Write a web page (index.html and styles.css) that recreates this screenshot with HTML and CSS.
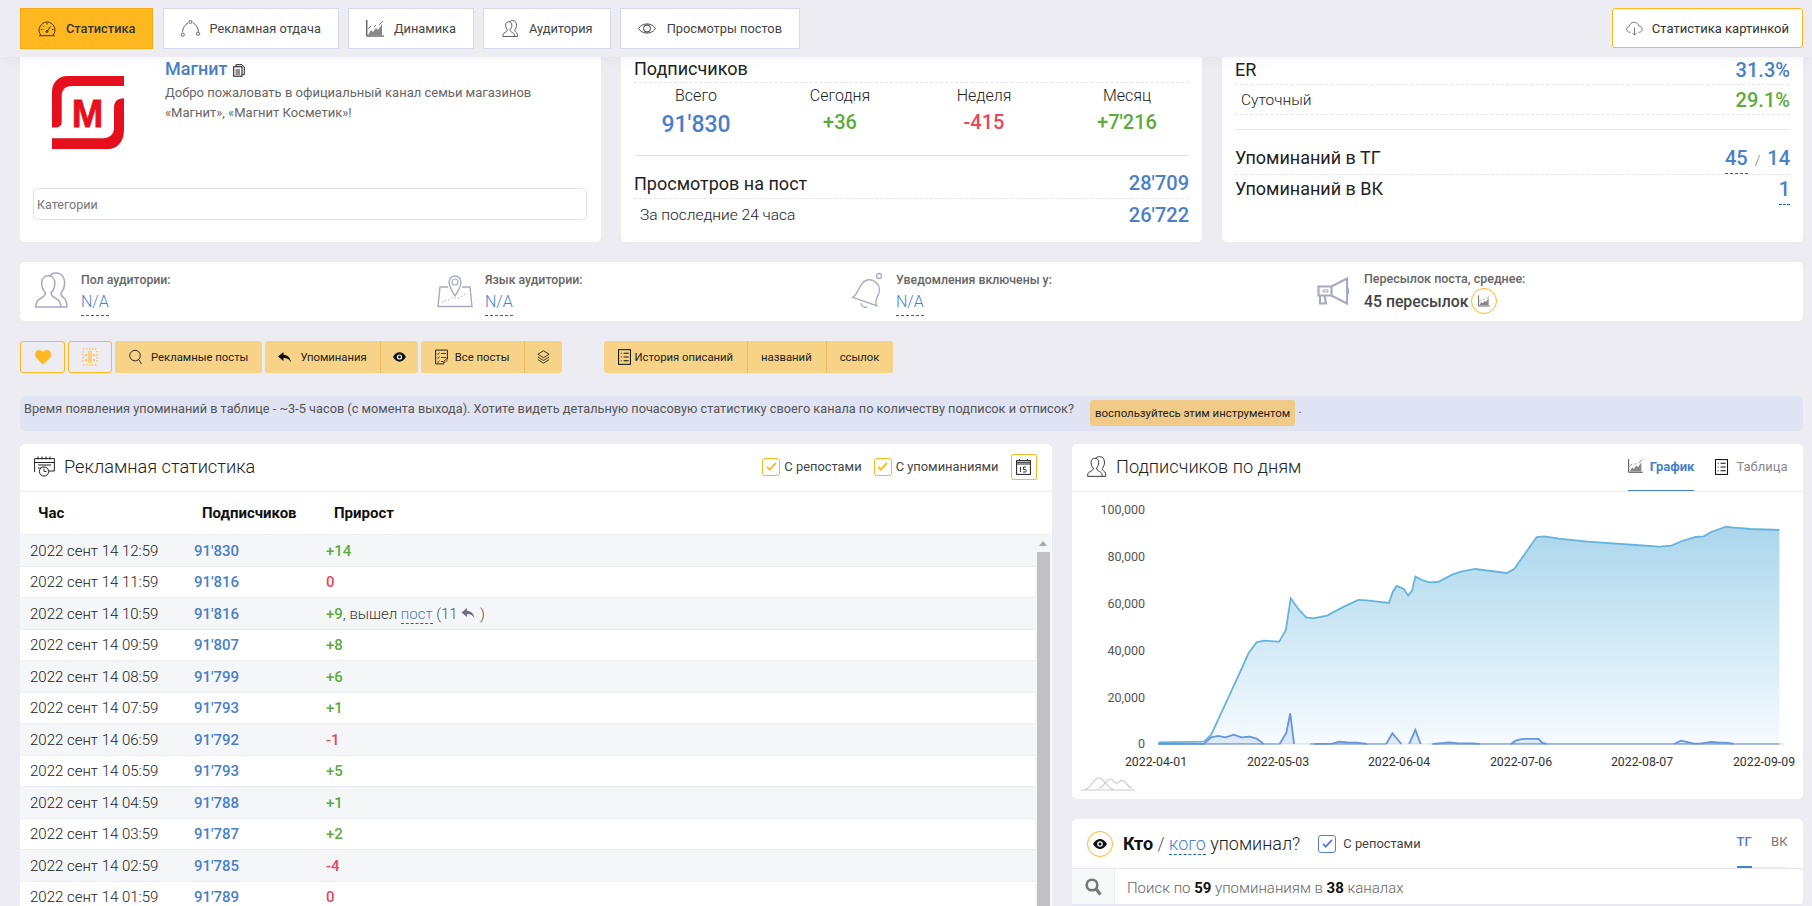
FILE: index.html
```html
<!DOCTYPE html>
<html lang="ru">
<head>
<meta charset="utf-8">
<title>Магнит — статистика</title>
<link rel="stylesheet" href="styles.css">
</head>
<body>
<svg class="sprite" aria-hidden="true">
  <defs>
    <linearGradient id="areaFill" x1="0" y1="0" x2="0" y2="1">
      <stop offset="0" stop-color="#abd6ec"/>
      <stop offset="1" stop-color="#f6fbfe"/>
    </linearGradient>
  </defs>
  <symbol id="i-gauge" viewBox="0 0 18 16"><path d="M3 14.500C1 12.500.7 10 1.300 7.800 2.400 4 5.500 1.500 9 1.500s6.600 2.500 7.700 6.300c.6 2.200.3 4.700-1.700 6.700M1 15.200h16M9 11l3.500-5M2.800 9H4.500M14 9h1.500M9 2.500v1.500M4.500 5l1 1" fill="none" stroke="#222" stroke-width=".9"/><circle cx="9" cy="11" r="1" fill="none" stroke="#222" stroke-width=".9"/></symbol>
  <symbol id="i-net" viewBox="0 0 22 18"><path d="M8.500 3C5 5 3 8 2.500 12.500M13.500 3c3.500 2 5.500 5 6 9.500" fill="none" stroke="#333" stroke-width=".8"/><circle cx="11" cy="2" r="1.600" fill="#fff" stroke="#333" stroke-width=".8"/><circle cx="2.800" cy="15.500" r="1.700" fill="#fff" stroke="#333" stroke-width=".8"/><circle cx="19" cy="14.500" r="1.700" fill="#fff" stroke="#333" stroke-width=".8"/></symbol>
  <symbol id="i-chart" viewBox="0 0 18 17"><path d="M.8 0v16h17" fill="none" stroke="#222" stroke-width="1"/><path d="M2 15l3-5 2 2 3-4 2 2 4-6v11z" fill="#888"/><path d="M2 9l3-3M8 7l2-2M13 5l4-4" stroke="#555" stroke-width=".8"/></symbol>
  <symbol id="i-users" viewBox="0 0 30 33"><path d="M13 5C14 2.500 17 1 20 1c4.500 0 7.500 3.500 7.500 8.500 0 5-1.500 8-3.500 10 0 2 1.500 3.500 3 4.500 1.500 1 2.500 3 2.500 8H24" fill="none" stroke="currentColor" stroke-width="1.400"/><path d="M1 32c0-4 1-6 4-7.500 3-1.500 5-3 5-5.500-2-2-3.500-5-3.500-9C6.500 6 9 3.500 12.500 3.500S18.500 6 18.500 10c0 4-1.500 7-3.500 9 0 2.500 2 4 5 5.500 3 1.500 4 3.500 4 7.500z" fill="#fff" stroke="currentColor" stroke-width="1.400"/></symbol>
  <symbol id="i-eye" viewBox="0 0 18 10"><path d="M.5 5C3 1.500 6 .5 9 .5s6 1 8.500 4.500C15 8.500 12 9.500 9 9.500S3 8.500.5 5z" fill="none" stroke="#222" stroke-width=".9"/><circle cx="9" cy="5" r="3.500" fill="none" stroke="#222" stroke-width=".9"/></symbol>
  <symbol id="i-cloud" viewBox="0 0 18 15"><path d="M5 11.500H4C2 11.500.7 10 .7 8.300c0-1.700 1.200-3 2.800-3.100C3.800 2.800 6 .8 8.500.8c2.400 0 4.500 1.700 5 4 1.900 0 3.700 1.400 3.700 3.500 0 1.800-1.400 3.200-3.200 3.200h-1M9 6.500v8M6.800 12.300L9 14.500l2.200-2.200" fill="none" stroke="#555" stroke-width=".8"/></symbol>
  <symbol id="i-copy" viewBox="0 0 12 13"><path d="M3 2.500V.7h6l2.300 2.300v7.500H9.500" fill="none" stroke="#222" stroke-width="1"/><rect x=".7" y="2.700" width="8.300" height="9.500" fill="#fff" stroke="#222" stroke-width="1.100"/><path d="M2.500 6h4.500M2.500 8h4.500M2.500 10h4.500" stroke="#222"/></symbol>
  <symbol id="i-pin" viewBox="0 0 36 36"><path d="M18 24c-3-5-6-9-6-14a6 6 0 0 1 12 0c0 5-3 9-6 14z" fill="#fff" stroke="currentColor" stroke-width="1.400"/><circle cx="18" cy="10" r="3" fill="none" stroke="currentColor" stroke-width="1.200"/><path d="M11 15H3L1 34.500h34L33 15h-8" fill="none" stroke="currentColor" stroke-width="1.400"/><path d="M5 31c2-4 5-1 8-4s4 0 8-1 5-3 9-5" fill="none" stroke="currentColor" stroke-dasharray="1.500 2"/></symbol>
  <symbol id="i-bell" viewBox="0 0 36 36"><path d="M9 30C12 26 10 19 12 13c1.500-5 7-8 12-6 5 1.500 7.500 6 7 11-.5 5 1.500 9 3 10z" transform="rotate(24 18 18)" fill="none" stroke="currentColor" stroke-width="1.400"/><circle cx="31" cy="4" r="2.500" fill="none" stroke="currentColor" stroke-width="1.300"/><path d="M13 31c0 3 3 5 6 4" fill="none" stroke="currentColor" stroke-width="1.400"/></symbol>
  <symbol id="i-horn" viewBox="0 0 32 28"><path d="M1.500 9.500h13L30 1.500v25l-15.500-8H1.500zM14.500 9.500v9M3 18.500v8h6l-1.500-8M30 11c2 1 2 5 0 6" fill="none" stroke="currentColor" stroke-width="2.200"/><path d="M6 13h5v2H6z" fill="none" stroke="currentColor"/></symbol>
  <symbol id="i-heart" viewBox="0 0 16 15"><path d="M8 14.500C3 10 0 7.500 0 4.300 0 1.800 2 0 4.300 0 5.800 0 7.200.8 8 2c.8-1.200 2.200-2 3.700-2C14 0 16 1.800 16 4.300c0 3.200-3 5.700-8 10.200z" fill="#ffb81f"/></symbol>
  <symbol id="i-search" viewBox="0 0 14 16"><circle cx="6.500" cy="6.500" r="5.700" fill="none" stroke="#222" stroke-width="1"/><path d="M10.500 10.800L13.500 15.500" stroke="#222" stroke-width="1"/></symbol>
  <symbol id="i-reply" viewBox="0 0 14 11"><path d="M5.500 0L0 4.500 5.500 9V6c3.500 0 5.500 1 7.500 4.500C12.500 6 10 3 5.500 2.700z" fill="currentColor"/></symbol>
  <symbol id="i-eyefill" viewBox="0 0 14 10"><path d="M0 5c2-3.500 4.500-5 7-5s5 1.500 7 5c-2 3.500-4.500 5-7 5S2 8.500 0 5z" fill="#111"/><circle cx="7" cy="5" r="2.800" fill="#fff"/><circle cx="7" cy="5" r="1.500" fill="#111"/></symbol>
  <symbol id="i-posts" viewBox="0 0 13 15"><path d="M9 14.400H.6V.6h11.800v9" fill="none" stroke="#222" stroke-width="1"/><path d="M2 4l1 1 1.500-2M6 4h5M2 8l1 1 1.500-2M6 8h5M2 12l1 1 1.500-2M6 12h2M8.500 13.500l.5-2 3.500-3 1 1-3.500 3.500z" fill="none" stroke="#222" stroke-width=".8"/></symbol>
  <symbol id="i-layers" viewBox="0 0 15 16"><path d="M7.500.8l6.500 4-6.500 4-6.500-4zM1 8l6.500 4L14 8M1 11l6.500 4L14 11" fill="none" stroke="#222" stroke-width="1"/></symbol>
  <symbol id="i-list" viewBox="0 0 14 17"><rect x=".6" y=".6" width="12.800" height="15.800" fill="none" stroke="#111" stroke-width="1.100"/><path d="M3 4.500h1M6 4.500h5.500M3 8.500h1M6 8.500h5.500M3 12.500h1M6 12.500h5.500" stroke="#111" stroke-width="1.100"/></symbol>
  <symbol id="i-calclock" viewBox="0 0 21 21"><path d="M.6 16V2.600h19.800V15H14M.6 6.500h19.800M4 .5v3M8 .5v3M12 .5v3M16 .5v3M4 9h13M4 12h6" fill="none" stroke="#222" stroke-width="1"/><circle cx="10" cy="15.500" r="4.600" fill="#fff" stroke="#222"/><path d="M10 12.500v3h2.500" fill="none" stroke="#222" stroke-width=".9"/></symbol>
  <symbol id="i-cal15" viewBox="0 0 15 16"><rect x=".6" y="1.600" width="13.800" height="13.800" fill="none" stroke="#222" stroke-width="1"/><path d="M.6 5h13.800M.6 3.300h13.800M3.500 0v2M11.500 0v2" stroke="#222"/><path d="M4.500 8v5M7 13h2.500c1 0 1-2.500 0-2.500H7.500V8h2.500" fill="none" stroke="#222" stroke-width=".9"/></symbol>
  <symbol id="i-check" viewBox="0 0 12 10"><path d="M1 5.500l3 3L11 1" fill="none" stroke="currentColor" stroke-width="2"/></symbol>
  <symbol id="i-mag" viewBox="0 0 17 18"><circle cx="7" cy="7" r="5.300" fill="none" stroke="#777" stroke-width="2.600"/><path d="M11 11l4.500 5.500" stroke="#777" stroke-width="3.200"/></symbol>
  <symbol id="i-qr" viewBox="0 0 16 20"><path d="M1 2h14M1 18h14M1 4v12M15 4v12" fill="none" stroke="#ffc75a" stroke-width="1.500" stroke-dasharray="1.500 1.500"/><path d="M6 4h4v12H6z" fill="#ffcf7a"/><path d="M3 7h2v2H3zM11 7h2v2h-2zM3 12h2v2H3zM11 12h2v2h-2z" fill="#ffb81f" opacity=".7"/></symbol>
</svg>

<header class="topbar">
  <nav class="tabs">
    <a class="tab tab-active"><svg class="ic-nav"><use href="#i-gauge"/></svg>Статистика</a>
    <a class="tab"><svg class="ic-nav ic-wide"><use href="#i-net"/></svg>Рекламная отдача</a>
    <a class="tab"><svg class="ic-nav"><use href="#i-chart"/></svg>Динамика</a>
    <a class="tab"><svg class="ic-nav"><use href="#i-users"/></svg>Аудитория</a>
    <a class="tab"><svg class="ic-nav ic-eye"><use href="#i-eye"/></svg>Просмотры постов</a>
  </nav>
  <a class="tab tab-outline"><svg class="ic-cloud"><use href="#i-cloud"/></svg>Статистика картинкой</a>
</header>

<section class="summary">
  <article class="card profile">
    <div class="profile-main">
      <svg class="logo" viewBox="0 0 73 73" role="img" aria-label="Магнит">
        <path class="logo-shape" d="M72 0H15C6 0 0 7 0 16V51.500H4C7.500 51.500 9.700 49 9.700 46V20C9.700 14 13 10 20 10H72Z"/>
        <path class="logo-shape" d="M0 62.300H51C57.500 62.300 62 58 62 52V32C62 26 65 22.300 72 22.300V54C72 66 65 73 56 73H0Z"/>
        <text class="logo-m" x="19.700" y="50.700" textLength="31.600" lengthAdjust="spacingAndGlyphs">М</text>
      </svg>
      <div class="profile-text">
        <h1 class="channel">Магнит <svg class="ic-copy"><use href="#i-copy"/></svg></h1>
        <p class="desc">Добро пожаловать в официальный канал семьи магазинов «Магнит», «Магнит Косметик»!</p>
      </div>
    </div>
    <div class="cat-input">Категории</div>
  </article>

  <article class="card stats">
    <div class="line line-title">Подписчиков</div>
    <div class="quad">
      <div class="q-item"><span class="q-label">Всего</span><b class="q-big blue">91'830</b></div>
      <div class="q-item"><span class="q-label">Сегодня</span><b class="q-num green">+36</b></div>
      <div class="q-item"><span class="q-label">Неделя</span><b class="q-num red">-415</b></div>
      <div class="q-item"><span class="q-label">Месяц</span><b class="q-num green">+7'216</b></div>
    </div>
    <div class="line line-views"><span>Просмотров на пост</span><b class="val blue">28'709</b></div>
    <div class="line line-sub line-plain"><span>За последние 24 часа</span><b class="val blue">26'722</b></div>
  </article>

  <article class="card stats">
    <div class="line line-er"><span>ER</span><b class="val blue">31.3%</b></div>
    <div class="line line-sub line-day"><span>Суточный</span><b class="val green">29.1%</b></div>
    <div class="line line-tg"><span>Упоминаний в ТГ</span><span class="val-wrap"><b class="val blue dash">45</b><i class="slash">/</i><b class="val blue">14</b></span></div>
    <div class="line line-vk"><span>Упоминаний в ВК</span><b class="val blue dash">1</b></div>
  </article>
</section>

<section class="card audience">
  <div class="aud-item"><svg class="ic-aud"><use href="#i-users"/></svg><div><div class="aud-label">Пол аудитории:</div><a class="aud-link">N/A</a></div></div>
  <div class="aud-item"><svg class="ic-aud"><use href="#i-pin"/></svg><div><div class="aud-label">Язык аудитории:</div><a class="aud-link">N/A</a></div></div>
  <div class="aud-item"><svg class="ic-aud"><use href="#i-bell"/></svg><div><div class="aud-label">Уведомления включены у:</div><a class="aud-link">N/A</a></div></div>
  <div class="aud-item"><svg class="ic-aud ic-horn"><use href="#i-horn"/></svg><div><div class="aud-label aud-label-top">Пересылок поста, среднее:</div><div class="aud-value">45 пересылок <span class="round"><svg class="ic-round"><use href="#i-chart"/></svg></span></div></div></div>
</section>

<section class="actions">
  <div class="act-group">
    <a class="act-square"><svg class="ic-heart"><use href="#i-heart"/></svg></a>
    <a class="act-square act-square2"><svg class="ic-qr"><use href="#i-qr"/></svg></a>
    <div class="btns"><a class="btn"><svg class="ic-btn ic-search"><use href="#i-search"/></svg>Рекламные посты</a></div>
    <div class="btns"><a class="btn btn-reply"><svg class="ic-reply"><use href="#i-reply"/></svg>Упоминания</a><a class="btn btn-icon"><svg class="ic-small"><use href="#i-eyefill"/></svg></a></div>
    <div class="btns"><a class="btn"><svg class="ic-btn"><use href="#i-posts"/></svg>Все посты</a><a class="btn btn-icon"><svg class="ic-btn"><use href="#i-layers"/></svg></a></div>
  </div>
  <div class="btns btns-history">
    <a class="btn"><svg class="ic-btn ic-hist"><use href="#i-list"/></svg>История описаний</a><a class="btn">названий</a><a class="btn">ссылок</a>
  </div>
</section>

<p class="notice">Время появления упоминаний в таблице - ~3-5 часов (с момента выхода). Хотите видеть детальную почасовую статистику своего канала по количеству подписок и отписок? <a class="notice-btn">воспользуйтесь этим инструментом</a> .</p>

<main class="columns">
  <article class="card panel-ads">
    <header class="panel-head">
      <h2 class="panel-title"><svg class="ic-title"><use href="#i-calclock"/></svg>Рекламная статистика</h2>
      <div class="panel-tools">
        <label class="chk"><span class="box"><svg class="ic-check"><use href="#i-check"/></svg></span>С репостами</label>
        <label class="chk"><span class="box"><svg class="ic-check"><use href="#i-check"/></svg></span>С упоминаниями</label>
        <a class="cal-btn"><svg class="ic-cal"><use href="#i-cal15"/></svg></a>
      </div>
    </header>
    <div class="thead"><span class="th th-hour">Час</span><span class="th th-subs">Подписчиков</span><span class="th">Прирост</span></div>
    <div class="tbody">
      <div class="rows">
        <div class="row"><span class="c-date">2022 сент 14 12:59</span><b class="c-subs">91'830</b><span class="c-grow"><b class="green">+14</b></span></div>
        <div class="row"><span class="c-date">2022 сент 14 11:59</span><b class="c-subs">91'816</b><span class="c-grow"><b class="red">0</b></span></div>
        <div class="row"><span class="c-date">2022 сент 14 10:59</span><b class="c-subs">91'816</b><span class="c-grow"><b class="green">+9</b>, вышел <a class="post-link">пост</a> <span class="muted">(11 <svg class="ic-reply-row"><use href="#i-reply"/></svg> )</span></span></div>
        <div class="row"><span class="c-date">2022 сент 14 09:59</span><b class="c-subs">91'807</b><span class="c-grow"><b class="green">+8</b></span></div>
        <div class="row"><span class="c-date">2022 сент 14 08:59</span><b class="c-subs">91'799</b><span class="c-grow"><b class="green">+6</b></span></div>
        <div class="row"><span class="c-date">2022 сент 14 07:59</span><b class="c-subs">91'793</b><span class="c-grow"><b class="green">+1</b></span></div>
        <div class="row"><span class="c-date">2022 сент 14 06:59</span><b class="c-subs">91'792</b><span class="c-grow"><b class="red">-1</b></span></div>
        <div class="row"><span class="c-date">2022 сент 14 05:59</span><b class="c-subs">91'793</b><span class="c-grow"><b class="green">+5</b></span></div>
        <div class="row"><span class="c-date">2022 сент 14 04:59</span><b class="c-subs">91'788</b><span class="c-grow"><b class="green">+1</b></span></div>
        <div class="row"><span class="c-date">2022 сент 14 03:59</span><b class="c-subs">91'787</b><span class="c-grow"><b class="green">+2</b></span></div>
        <div class="row"><span class="c-date">2022 сент 14 02:59</span><b class="c-subs">91'785</b><span class="c-grow"><b class="red">-4</b></span></div>
        <div class="row"><span class="c-date">2022 сент 14 01:59</span><b class="c-subs">91'789</b><span class="c-grow"><b class="red">0</b></span></div>
      </div>
      <div class="scrollbar"><span class="scroll-up"></span><span class="scroll-thumb"></span></div>
    </div>
  </article>

  <div class="side">
    <article class="card panel-chart">
      <header class="panel-head">
        <h2 class="panel-title"><svg class="ic-title"><use href="#i-users"/></svg>Подписчиков по дням</h2>
        <div class="view-tabs">
          <a class="view-tab view-active"><svg class="ic-view"><use href="#i-chart"/></svg>График</a>
          <a class="view-tab"><svg class="ic-view"><use href="#i-list"/></svg>Таблица</a>
        </div>
      </header>
      <svg class="chart" viewBox="0 0 730 307" role="img" aria-label="Подписчиков по дням">
        <g class="y-axis">
          <text x="73" y="22">100,000</text>
          <text x="73" y="69">80,000</text>
          <text x="73" y="116">60,000</text>
          <text x="73" y="163">40,000</text>
          <text x="73" y="210">20,000</text>
          <text x="73" y="256">0</text>
        </g>
        <g class="x-axis">
          <text x="84" y="274">2022-04-01</text>
          <text x="206" y="274">2022-05-03</text>
          <text x="327" y="274">2022-06-04</text>
          <text x="449" y="274">2022-07-06</text>
          <text x="570" y="274">2022-08-07</text>
          <text x="692" y="274">2022-09-09</text>
        </g>
        <g transform="translate(-12 -52) scale(.4796 .3333)">
          <path class="area" d="M205 907L300 905 315 885 368 720 380 682 393 640 410 607 425 602 457 605 471 570 481 475 497 507 513 532 528 535 557 527 592 500 622 480 640 481 686 489 694 455 702 438 717 447 726 467 734 452 741 410 755 420 770 427 788 426 818 404 836 395 866 387 931 399 947 387 994 291 1010 289 1040 296 1100 305 1200 315 1250 320 1275 317 1297 303 1325 291 1342 289 1358 276 1389 260 1400 262 1440 267 1500 270V912H205Z"/>
          <path class="line-axis" d="M205 912H1510"/>
          <path class="line-subs" d="M205 907L300 905 315 885 368 720 380 682 393 640 410 607 425 602 457 605 471 570 481 475 497 507 513 532 528 535 557 527 592 500 622 480 640 481 686 489 694 455 702 438 717 447 726 467 734 452 741 410 755 420 770 427 788 426 818 404 836 395 866 387 931 399 947 387 994 291 1010 289 1040 296 1100 305 1200 315 1250 320 1275 317 1297 303 1325 291 1342 289 1358 276 1389 260 1400 262 1440 267 1500 270"/>
          <path class="line-base" d="M205 912H458M521 912H680M775 912H1500"/>
          <path class="line-ads" d="M205 912L300 912 315 892 330 888 345 892 362 884 378 892 395 890 410 896 425 912M458 912L472 878 480 820 488 912M530 912L568 911 582 905 600 907 620 908 640 912M680 912L693 880 712 912M728 912L741 870 752 912M778 912L812 907 830 910 860 910 875 912M940 912L950 902 965 897 998 897 1005 908 1015 912M1280 912L1295 902 1320 910 1335 911 1358 906 1375 908 1390 908 1405 912"/>
        </g>
        <path class="nav-hills" d="M9 298H63M13 297c6 0 8-11 14-11s8 11 14 11M27 296c5-1 8-9 11-9 4 0 4 5 7 4 3-1 4-4 7-2 3 2 4 7 8 7"/>
      </svg>
    </article>

    <article class="card panel-mentions">
      <header class="ment-head">
        <span class="eye-round"><svg class="ic-eye-round"><use href="#i-eyefill"/></svg></span>
        <h2 class="ment-title"><b>Кто</b> <i class="slash2">/</i> <a class="who">кого</a> упоминал?</h2>
        <label class="chk chk-blue"><span class="box"><svg class="ic-check"><use href="#i-check"/></svg></span>С репостами</label>
        <div class="net-tabs"><a class="net-tab net-active">ТГ</a><a class="net-tab">ВК</a></div>
      </header>
      <div class="search-row">
        <span class="search-ic"><svg class="ic-mag"><use href="#i-mag"/></svg></span>
        <span class="search-text">Поиск по <b>59</b> упоминаниям в <b>38</b> каналах</span>
      </div>
    </article>
  </div>
</main>
</body>
</html>
```

FILE: styles.css
```css
* { box-sizing: border-box; }
html, body { height: 906px; overflow: hidden; }
body {
  margin: 0;
  width: 1812px;
  background: #edecf2;
  font-family: Roboto, "Noto Sans", sans-serif;
  font-size: 14px;
  color: #222;
}
a { color: inherit; text-decoration: none; }
h1, h2, p { margin: 0; font-weight: 400; }
i { font-style: normal; }
.sprite { position: absolute; width: 0; height: 0; }
.blue { color: #4a7fc9; }
.green { color: #5bab3d; }
.red { color: #e8475c; }
b { font-weight: 500; }

.card { background: #fff; border-radius: 5px; }

/* top bar */
.topbar {
  position: relative;
  z-index: 2;
  height: 57px;
  padding: 8px 9px 0 20px;
  display: flex;
  justify-content: space-between;
  align-items: flex-start;
  background: #edecf2;
  box-shadow: 0 4px 8px rgba(120, 120, 150, .06);
}
.tabs { display: flex; gap: 9px; }
.tab {
  height: 41px;
  display: flex;
  align-items: center;
  padding: 0 17px;
  background: #fff;
  border: 1px solid #d8daec;
  font-size: 12.800px;
  color: #444;
  white-space: nowrap;
}
.tab-active {
  background: #ffb81f;
  border-color: #f5ad12;
  color: #333;
  font-weight: 500;
  margin-right: 1px;
}
.tab-outline { border: 1px solid #ffb81f; border-radius: 3px; padding: 0 13px; height: 40px; color: #333; font-size: 13px; }
.ic-nav { width: 18px; height: 17px; margin-right: 10px; color: #222; }
.ic-wide { width: 21px; margin-left: -1px; margin-right: 8px; }
.ic-eye { height: 11px; margin-right: 11px; }
.ic-cloud { width: 17px; height: 15px; margin-right: 9px; }

/* summary cards */
.summary {
  display: grid;
  grid-template-columns: repeat(3, 581px);
  gap: 20px;
  padding-left: 20px;
}
.summary > .card { height: 185px; border-radius: 0 0 5px 5px; }
.profile { display: flex; flex-direction: column; justify-content: space-between; padding: 0 14px 22px 13px; }
.profile-main { display: flex; padding-left: 19px; }
.logo { width: 73px; height: 73px; margin: 19px 40px 0 0; flex: none; }
.logo-shape { fill: #e60f1e; }
.logo-m { font-family: "Liberation Sans", sans-serif; font-weight: 700; font-size: 39px; fill: #e60f1e; stroke: #e60f1e; stroke-width: .8; }
.channel { font-size: 18px; font-weight: 500; color: #4a7fc9; line-height: 24px; }
.ic-copy { width: 12px; height: 13px; vertical-align: -2px; margin-left: 1px; }
.desc { font-size: 13px; line-height: 20px; color: #666; margin-top: 2px; width: 380px; }
.cat-input {
  height: 32px;
  border: 1px solid #e3e4ee;
  border-radius: 4px;
  font-size: 12.500px;
  line-height: 31px;
  color: #777;
  padding-left: 3px;
}

.stats { padding: 0 13px; }
.line { display: flex; justify-content: space-between; align-items: center; font-size: 18px; color: #222; border-bottom: 1px dashed #e4e4e8; }
.line-title { height: 26px; padding-bottom: 2px; }
.line-sub { font-size: 15.500px; font-weight: 300; padding-left: 6px; }
.line-plain { border-bottom: 0; height: 32px; }
.val { font-size: 20px; font-weight: 500; }
.quad { display: flex; height: 73px; border-bottom: 1px solid #e4e4e8; text-align: center; }
.q-item { display: flex; flex-direction: column; width: 100px; margin-left: 44px; }
.q-item:first-child { margin-left: 12px; }
.q-item:last-child { margin-left: 43px; }
.q-label { font-size: 16px; font-weight: 300; line-height: 18px; margin-top: 4px; }
.q-big { font-size: 23px; line-height: 34px; margin-top: 3px; }
.q-num { font-size: 20px; line-height: 30px; margin-top: 2px; }
.line-views { height: 43px; padding-top: 12px; }
.line-er { height: 28px; padding-bottom: 2px; }
.line-day { height: 30px; }
.line-tg { height: 46px; margin-top: 14px; border-top: 1px solid #e4e4e8; align-items: flex-start; padding-top: 16px; line-height: 24px; }
.line-vk { align-items: flex-start; border: 0; padding-top: 2px; line-height: 24px; }
.val-wrap { display: flex; align-items: flex-start; }
.dash { display: inline-block; height: 28px; border-bottom: 1px dashed #1565c0; }
.slash { font-size: 14px; color: #777; margin: 3px 7px 0; font-weight: 300; }

/* audience */
.audience {
  display: grid;
  grid-template-columns: 404px 411px 470px auto;
  width: 1783px;
  height: 59px;
  margin: 20px 0 0 20px;
  padding: 10px 0 0 12px;
}
.aud-item { display: flex; }
.ic-aud { width: 38px; height: 36px; margin-right: 11px; color: #a7abc2; flex: none; }
.ic-horn { width: 32px; height: 28px; margin: 5px 15px 0 0; }
.aud-label { font-size: 12.300px; font-weight: 500; color: #666; line-height: 16px; }
.aud-label-top { margin-top: -1px; font-size: 12.500px; }
.aud-link { display: inline-block; font-size: 16px; color: #4a7fc9; line-height: 20px; margin-top: 4px; height: 24px; border-bottom: 1px dashed #1565c0; font-weight: 300; }
.aud-value { font-size: 15.800px; font-weight: 500; color: #444; display: flex; align-items: center; gap: 3px; margin-top: 1px; }
.round { width: 26px; height: 26px; flex: none; border: 1px solid #ffb81f; border-radius: 50%; display: flex; align-items: center; justify-content: center; }
.ic-round { width: 12px; height: 12px; }

/* action buttons */
.actions { display: flex; margin: 20px 0 0 20px; height: 32px; }
.act-group { display: flex; gap: 3px; }
.act-square { width: 45px; height: 32px; border: 1px solid #ffb81f; border-radius: 3px; display: flex; align-items: center; justify-content: center; }
.act-square2 { width: 44px; }
.ic-heart { width: 16px; height: 15px; }
.ic-qr { width: 16px; height: 20px; }
.btns { display: flex; background: #f6d387; border-radius: 3px; }
.btns-history { margin-left: 42px; }
.btn { display: flex; align-items: center; padding: 0 14px 0 13px; font-size: 11.300px; color: #222; border-left: 1px solid #f0bd5c; height: 32px; white-space: nowrap; }
.btn:first-child { border-left: 0; padding: 0 14px; }
.btn.btn-reply { padding: 0 13px; }
.btn-icon { padding: 0 12px; }
.ic-btn { width: 13px; height: 16px; margin-right: 7px; }
.ic-search { margin-right: 9px; width: 13px; }
.ic-hist { margin-right: 4px; }
.btn-icon .ic-btn { margin-right: 0; }
.ic-reply { width: 14px; height: 11px; margin-right: 8px; color: #111; }
.ic-small { width: 13px; height: 10px; }

/* notice */
.notice {
  width: 1783px;
  height: 35px;
  margin: 23px 0 0 20px;
  padding: 0 4px;
  background: #e0e3f3;
  border-radius: 5px;
  font-size: 12.740px;
  line-height: 26px;
  color: #555;
  white-space: nowrap;
}
.notice-btn { display: inline-block; height: 26px; margin: 4px 0 0 13px; padding: 0 5px; background: #f0cb88; border-radius: 3px; color: #222; font-size: 11.400px; line-height: 27px; vertical-align: top; }

/* columns */
.columns { display: grid; grid-template-columns: 1031.500px 730.500px; gap: 20.500px; align-items: start; margin: 13px 0 0 20px; }
.panel-ads { overflow: hidden; }
.panel-head { height: 48px; display: flex; justify-content: space-between; align-items: center; border-bottom: 1px solid #edecf2; padding: 0 15px 2px 14px; }
.panel-title { font-size: 18.200px; font-weight: 300; color: #222; display: flex; align-items: center; }
.ic-title { width: 21px; height: 21px; margin-right: 9px; color: #222; }
.panel-tools { display: flex; align-items: center; }
.chk { display: flex; align-items: center; font-size: 12.900px; color: #444; margin-right: 12px; }
.box { width: 18px; height: 18px; border: 1px solid #ffb81f; border-radius: 3px; display: flex; align-items: center; justify-content: center; margin-right: 4px; color: #ffb81f; }
.ic-check { width: 11px; height: 9px; }
.cal-btn { width: 26px; height: 26px; border: 1px solid #ffb81f; border-radius: 2px; display: flex; align-items: center; justify-content: center; }
.ic-cal { width: 15px; height: 16px; }
.thead { height: 43px; display: flex; align-items: center; font-size: 15px; font-weight: 700; color: #111; border-bottom: 1px solid #edecf2; }
.th-hour { width: 182px; padding-left: 18px; }
.th-subs { width: 132px; }
.tbody { display: flex; }
.rows { width: 1015px; }
.row { height: 31.500px; display: flex; align-items: center; border-bottom: 1px solid #eceef2; font-size: 15px; padding-top: 1px; }
.row:nth-child(odd) { background: #f5f6f8; }
.c-date { width: 174px; padding-left: 10px; font-weight: 300; color: #222; white-space: nowrap; }
.c-subs { width: 132px; color: #4a7fc9; }
.c-grow { color: #333; font-weight: 300; }
.c-grow b { font-weight: 500; }
.post-link { color: #4a7fc9; border-bottom: 1px dashed #1565c0; }
.muted { color: #555; }
.ic-reply-row { width: 15px; height: 11px; color: #6c7080; }
.scrollbar { width: 16px; display: flex; flex-direction: column; align-items: center; background: #f5f6f8; }
.scroll-up { width: 0; height: 0; margin: 6px 0 6px; border: 4px solid transparent; border-top: 0; border-bottom: 5px solid #a8a8a8; }
.scroll-thumb { width: 13px; flex: 1; background: #c1c1c1; }

/* chart */
.side { display: flex; flex-direction: column; gap: 20px; }
.view-tabs { display: flex; gap: 20px; align-self: stretch; margin-bottom: -2px; }
.view-tab { display: flex; align-items: center; font-size: 13px; color: #888; padding-bottom: 2px; }
.view-active { color: #4a7fc9; font-weight: 700; border-bottom: 1px solid #4a7fc9; }
.ic-view { width: 15px; height: 16px; margin-right: 7px; }
.chart { display: block; width: 730px; height: 307px; }
.y-axis text { font-size: 12.500px; fill: #555; text-anchor: end; font-family: Roboto, sans-serif; }
.x-axis text { font-size: 12.300px; fill: #333; text-anchor: middle; font-family: Roboto, sans-serif; }
.area { fill: url(#areaFill); }
.line-axis { fill: none; stroke: #dcdce2; stroke-width: 1; vector-effect: non-scaling-stroke; }
.line-subs { fill: none; stroke: #66b4dc; stroke-width: 1.800; vector-effect: non-scaling-stroke; }
.line-base { fill: none; stroke: #5a88d0; stroke-width: 1; vector-effect: non-scaling-stroke; }
.line-ads { fill: rgba(74, 127, 201, .14); stroke: #6795dc; stroke-width: 1.800; vector-effect: non-scaling-stroke; }
.nav-hills { fill: none; stroke: #c9c9c9; stroke-width: 1.200; }

/* mentions */
.ment-head { height: 49px; display: flex; align-items: center; padding-left: 15px; position: relative; }
.eye-round { width: 26px; height: 26px; border: 1px solid #ffb81f; border-radius: 50%; display: flex; align-items: center; justify-content: center; margin-right: 10px; }
.ic-eye-round { width: 14px; height: 10px; }
.ment-title { font-size: 18px; font-weight: 300; color: #222; white-space: nowrap; }
.ment-title b { font-weight: 700; color: #111; }
.slash2 { color: #555; }
.who { color: #4a7fc9; border-bottom: 1px dashed #1565c0; }
.chk-blue { margin: 0 0 0 18px; }
.chk-blue .box { border-color: #5b79e0; color: #5b79e0; margin-right: 7px; }
.net-tabs { margin-left: auto; margin-right: 15px; display: flex; align-self: flex-end; height: 40px; border-bottom: 1px solid #eceef4; width: 51px; justify-content: space-between; }
.net-tab { font-size: 13px; color: #777; height: 40px; line-height: 27px; }
.net-active { color: #4a7fc9; font-weight: 500; border-bottom: 2px solid #4a7fc9; width: 15px; }
.search-row { height: 37px; display: flex; align-items: center; border-top: 1px solid #e4e5ee; border-bottom: 1px solid #e4e5ee; }
.search-ic { width: 43px; height: 100%; display: flex; align-items: center; justify-content: center; background: #f7f8fa; border-right: 1px solid #eceef4; flex: none; }
.ic-mag { width: 17px; height: 18px; }
.search-text { font-size: 15px; color: #666; margin-left: 12px; margin-top: 2px; font-weight: 300; }
.search-text b { font-weight: 700; color: #111; }
```
